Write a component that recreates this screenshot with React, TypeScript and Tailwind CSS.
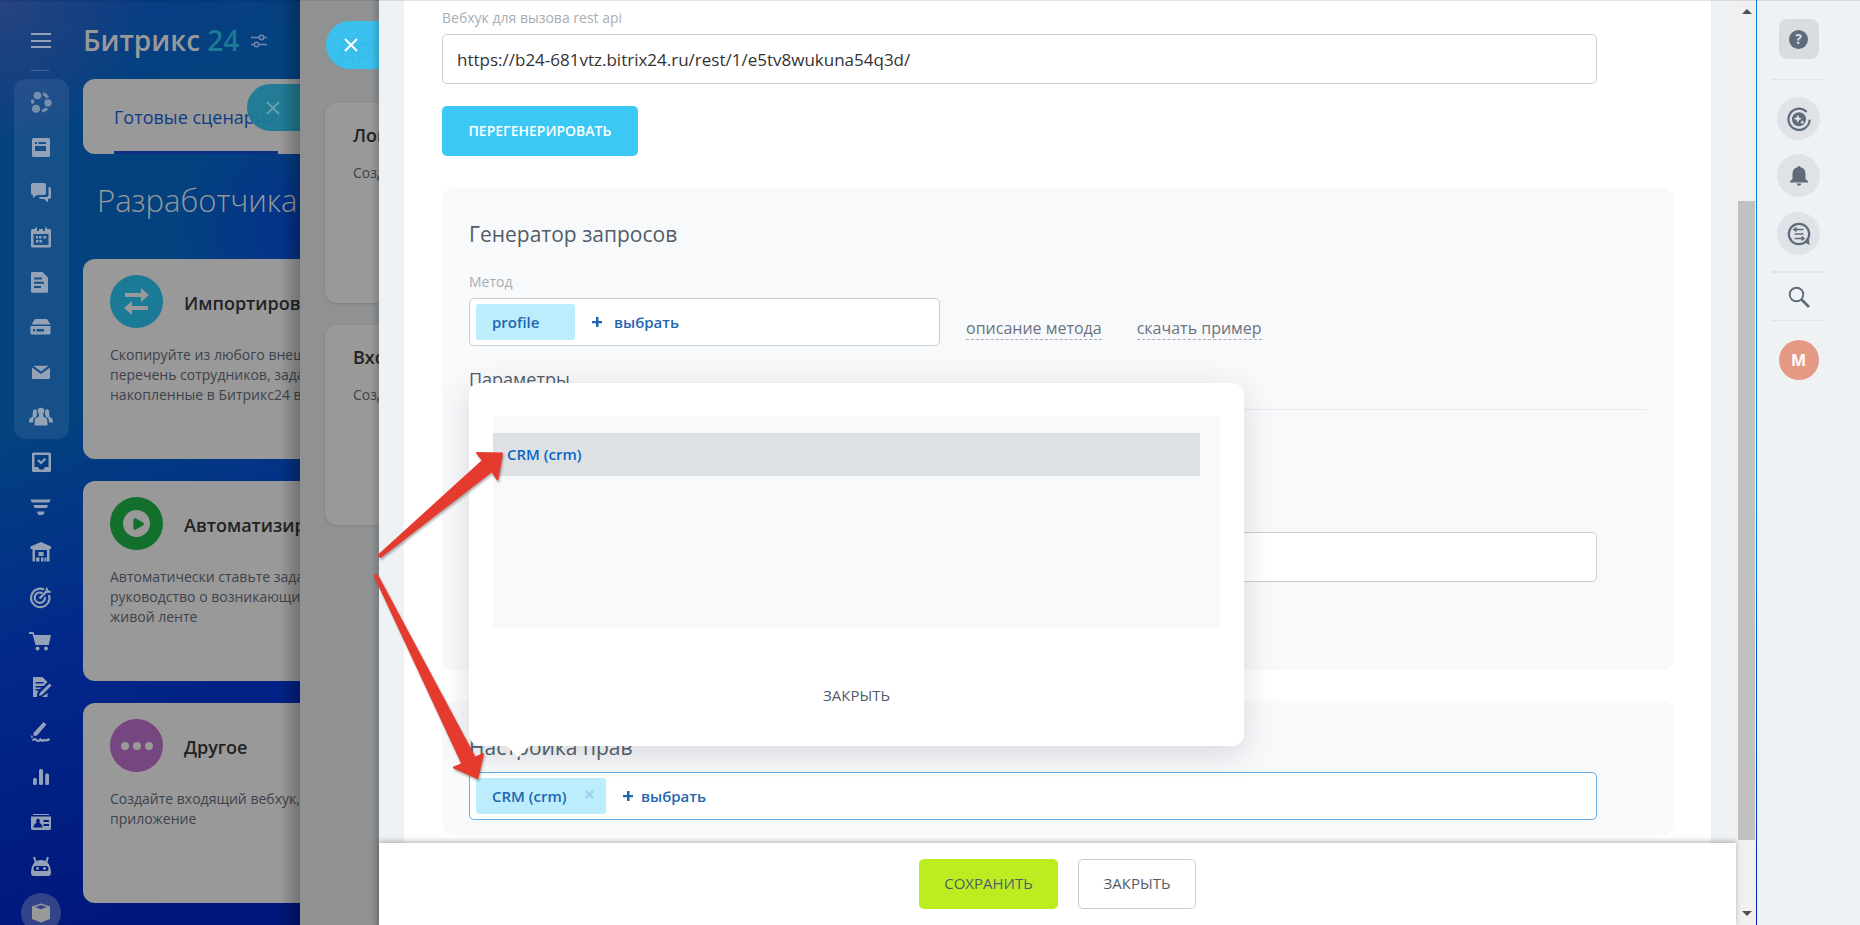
import type { ReactNode } from "react";
import { Play } from "lucide-react";

type NavItem = { label: string; icon: ReactNode };

const mainNav: NavItem[] = [
  {
    label: "CoPilot",
    icon: (
      <g opacity=".75">
        <circle cx="8.5" cy="5.5" r="3.8" />
        <circle cx="19" cy="13" r="3.7" />
        <circle cx="7" cy="18.7" r="4" />
        <path
          d="M14 3.6Q17 4.8 18.6 7.8M4 9.5Q3 12 4.2 13.6M13 21Q16 20.4 18.2 18.4"
          fill="none"
          stroke="currentColor"
          strokeWidth="3.2"
        />
      </g>
    ),
  },
  {
    label: "Лента",
    icon: (
      <path
        fillRule="evenodd"
        d="M4.500 3h15A1.500 1.500 0 0 1 21 4.500v16a1.500 1.500 0 0 1-1.500 1.500h-15A1.500 1.500 0 0 1 3 20.500v-16A1.500 1.500 0 0 1 4.500 3zM6 7v2h2V7zm3.500 0v2H17V7zM6 11v5h11v-5z"
      />
    ),
  },
  {
    label: "Чаты",
    icon: (
      <>
        <path d="M4 3h11a2 2 0 0 1 2 2v8a2 2 0 0 1-2 2H8l-4 3v-3a2 2 0 0 1-2-2V5a2 2 0 0 1 2-2z" />
        <path d="M19.500 7H20a2 2 0 0 1 2 2v8a2 2 0 0 1-2 2h-1v3.500L15 19h-3a2 2 0 0 1-2-2h7.500a2 2 0 0 0 2-2z" />
      </>
    ),
  },
  {
    label: "Календарь",
    icon: (
      <path
        fillRule="evenodd"
        d="M6 2.500h2V6h2V4h4v2h2V2.500h2V4h2.500A1.500 1.500 0 0 1 22 5.500V21a1.500 1.500 0 0 1-1.500 1.500h-17A1.500 1.500 0 0 1 2 21V5.500A1.500 1.500 0 0 1 3.500 4H6zM4.500 9v11h15V9zM10 11h2.500v2.500H10zm4.500 0H17v2.500h-2.500zM7 15h2.500v2.500H7zm3.500 0H13v2.500h-2.500zM7 11h2v2.500H7z"
      />
    ),
  },
  {
    label: "Документы",
    icon: (
      <path
        fillRule="evenodd"
        d="M3 2h10.500L19 7.500V21.500a1.200 1.200 0 0 1-1.200 1.200H3.200A1.200 1.200 0 0 1 2 21.500V3.200A1.200 1.200 0 0 1 3 2zM5 7.500v2h8v-2zm0 4.300v2h10v-2zm0 4.300v2h7v-2z"
      />
    ),
  },
  {
    label: "Диск",
    icon: (
      <path
        fillRule="evenodd"
        d="M6 4h12l3.500 5.500h-19zM1.500 11h20v7a1.500 1.500 0 0 1-1.500 1.500H2.500a1.500 1.500 0 0 1-1-1.500zM4 14v2.500h2V14zm3.500 0v2.500H15V14z"
      />
    ),
  },
  {
    label: "Почта",
    icon: (
      <>
        <path d="M3 7.500l9 6.500 9-6.500V18a1 1 0 0 1-1 1H4a1 1 0 0 1-1-1z" />
        <path d="M4.500 5.800h15L12 11.500z" />
      </>
    ),
  },
  {
    label: "Группы",
    icon: (
      <>
        <circle cx="12" cy="6" r="3.300" />
        <path d="M9.800 8.500h4.400v3l3.500 1.800Q18.500 15 18.500 20.500h-13q0-5.500.8-7.200l3.500-1.800z" />
        <path d="M4 5.500q2.500-2.500 3.700 0l.3 4-1.200 2.500-2.300 1.500-.5 4H0q0-3.500 1-4.300L3.500 12zM20 5.500q-2.500-2.500-3.700 0l-.3 4 1.200 2.500 2.300 1.500.5 4h4q0-3.500-1-4.300L20.500 12z" />
      </>
    ),
  },
];

const extraNav: NavItem[] = [
  {
    label: "Задачи",
    icon: (
      <>
        <path
          fillRule="evenodd"
          d="M4.500 2.500h16A1.500 1.500 0 0 1 22 4v16.500a1.500 1.500 0 0 1-1.500 1.500h-16A1.500 1.500 0 0 1 3 20.500V4a1.500 1.500 0 0 1 1.500-1.500zM5.500 5v12H9l1.500 2.500h4L16 17h3.500V5z"
        />
        <path d="M9 10l3 3 4.500-4.500" fill="none" stroke="currentColor" strokeWidth="2.200" />
      </>
    ),
  },
  {
    label: "CRM",
    icon: (
      <path d="M1.500 4.500h20L21 6.500a1.500 1.500 0 0 1-1.500 1H4A1.500 1.500 0 0 1 2.200 6.500zM4.500 10h14.500l-.6 2a1.500 1.500 0 0 1-1.400 1H6.500A1.500 1.500 0 0 1 5 12zM8 16.500h7.500q-.5 3.500-2.500 3.500h-2.500Q8.500 20 8 16.500z" />
    ),
  },
  {
    label: "Склад",
    icon: (
      <path
        fillRule="evenodd"
        d="M12 2l10 4.500V9H20.500v12.500H18V10H6v11.500H3.500V9H1.500V6.500zM9.500 12h5v4h-5zM7 17.500h3.500v4H7zm5 0h2.500v4H12zm3.500 0h2v4h-2z"
      />
    ),
  },
  {
    label: "Маркетинг",
    icon: (
      <g fill="none" stroke="currentColor" strokeWidth="2.100">
        <path d="M15 4.500A9.200 9.200 0 1 0 20 10" />
        <path d="M13.500 8.200A5.200 5.200 0 1 0 16 12" />
        <path d="M10.500 13.500L18 6" strokeWidth="2.400" />
        <path d="M17 6.500l.5-4 1.500 3 3 1.500-4 .5z" fill="currentColor" strokeWidth="1" />
      </g>
    ),
  },
  {
    label: "Магазин",
    icon: (
      <>
        <path d="M0 2h4.500l1 3H22l-2.200 10H6.500L3.500 4H0z" />
        <circle cx="8.500" cy="18.500" r="2" />
        <circle cx="17" cy="18.500" r="2" />
      </>
    ),
  },
  {
    label: "Подпись",
    icon: (
      <>
        <path
          fillRule="evenodd"
          d="M4 2h9.500l5 5L14 11.500V11H6.500v1.500h6L11 14H6.500v1.500h3L8 19v3H4zM6.500 7v1.500h8V7z"
        />
        <path d="M20.500 8.500l2 2L13 20l-3 1 .8-3zM18.500 18v4H13z" />
      </>
    ),
  },
  {
    label: "КЭДО",
    icon: (
      <>
        <path d="M14.500 2l3 2.500L8 15.500l-3.500.5V13zM2.500 15l2 2.500-2.500.5z" />
        <path
          d="M3.500 20.500q3-3 4 0 3 1 4-1 2 2 4 .5 2 1 5-1"
          fill="none"
          stroke="currentColor"
          strokeWidth="2.200"
        />
      </>
    ),
  },
  {
    label: "Аналитика",
    icon: (
      <>
        <rect x="4" y="13" width="3.800" height="7" rx="1.500" />
        <rect x="10" y="4" width="4" height="16" rx="1.500" />
        <rect x="16.200" y="8.500" width="3.800" height="11.500" rx="1.500" />
      </>
    ),
  },
  {
    label: "Сотрудники",
    icon: (
      <>
        <path d="M4 4h16v1H4z" />
        <path
          fillRule="evenodd"
          d="M2 6.500h20v12a1.500 1.500 0 0 1-1.500 1.500h-17A1.500 1.500 0 0 1 2 18.500zM9 8.500q-2.500.5-1.500 4.500-3 1-3 4.500h9q0-3.500-3-4.500 1-4-1.500-4.500zM14.500 10v2H20v-2zm0 4v2H20v-2z"
        />
      </>
    ),
  },
  {
    label: "Роботы",
    icon: (
      <>
        <path
          fillRule="evenodd"
          d="M12 5q9 0 10 12 0 3.500-2 4H4q-2-.5-2-4Q3 5 12 5zM6.500 11q-2 0-2 2.500t2 2.500h11q2 0 2-2.500t-2-2.500z"
        />
        <circle cx="8.500" cy="13.500" r="1.400" />
        <circle cx="15.500" cy="13.500" r="1.400" />
        <path d="M5 2l2 6M19 2l-2 6" stroke="currentColor" strokeWidth="2" />
      </>
    ),
  },
];

const scenarios = [
  {
    title: "Импортировать",
    color: "bg-[#1b7a96]",
    lines: [
      "Скопируйте из любого внешнего",
      "перечень сотрудников, задач",
      "накопленные в Битрикс24 в",
    ],
    icon: (
      <svg viewBox="0 0 53 53" className="size-[53px] fill-[#999]">
        <path d="M15 18h16v-5l8 7-8 7v-5H15zM38 31H22v-5l-8 7 8 7v-5h16z" />
      </svg>
    ),
  },
  {
    title: "Автоматизировать",
    color: "bg-[#13702c]",
    lines: ["Автоматически ставьте задачи", "руководство о возникающих", "живой ленте"],
    icon: (
      <span className="flex size-[27px] items-center justify-center rounded-full bg-[#999]">
        <Play className="ml-0.5 size-3.5 fill-[#13702c] text-[#13702c]" />
      </span>
    ),
  },
  {
    title: "Другое",
    color: "bg-[#764680]",
    lines: ["Создайте входящий вебхук,", "приложение"],
    icon: (
      <span className="flex gap-1">
        <i className="size-2 rounded-full bg-[#999]" />
        <i className="size-2 rounded-full bg-[#999]" />
        <i className="size-2 rounded-full bg-[#999]" />
      </span>
    ),
  },
];

function NavLink({ item }: { item: NavItem }) {
  return (
    <a href="#" aria-label={item.label} className="flex h-[45px] shrink-0 items-center justify-center pr-px">
      <svg viewBox="0 0 24 24" className="size-6 fill-current">
        {item.icon}
      </svg>
    </a>
  );
}

function Cross({ className }: { className: string }) {
  return (
    <svg viewBox="0 0 14 14" className={className} fill="none" stroke="currentColor">
      <path d="M1 1l12 12M13 1L1 13" strokeWidth="2" />
    </svg>
  );
}

function Plus() {
  return (
    <svg viewBox="0 0 10 10" className="size-2.5 fill-current">
      <path d="M4 0h2.500v4H10v2.200H6.500V10H4V6.200H0V4h4z" />
    </svg>
  );
}

function Portal() {
  return (
    <div className="flex w-[300px] shrink-0 overflow-hidden bg-[radial-gradient(circle_at_0_0,#26447f_0,#26447f00_150px),radial-gradient(circle_at_300px_230px,#04308a_0,#04308a00_130px),linear-gradient(160deg,#0a3a86_0%,#03427f_15%,#03427f_42%,#02298a_64%,#00157a_95%)]">
      <nav className="flex w-[83px] shrink-0 flex-col px-3.5 text-[#94a2b8]">
        <button
          aria-label="Меню"
          className="mt-[33px] ml-[17px] flex h-[15px] w-5 shrink-0 flex-col justify-between"
        >
          <span className="h-0.5 w-5 bg-current" />
          <span className="h-0.5 w-5 bg-current" />
          <span className="h-0.5 w-5 bg-current" />
        </button>
        <span className="mt-[22px] ml-[17px] h-px w-[18px] shrink-0 bg-white/20" />
        <div className="mt-2 shrink-0 rounded-xl bg-white/8">
          {mainNav.map((item) => (
            <NavLink key={item.label} item={item} />
          ))}
        </div>
        {extraNav.map((item) => (
          <NavLink key={item.label} item={item} />
        ))}
        <a
          href="#"
          aria-label="Разработчикам"
          className="mt-1 ml-[7px] flex size-10 shrink-0 items-center justify-center rounded-full bg-[#33438a] text-[#999]"
        >
          <svg viewBox="0 0 24 24" className="size-6 fill-current">
            <path d="M12 2.500l9 3v12.500l-9 3.500-9-3.500V5.500z" />
            <path d="M12 4l6 2-6 2.200L6 6z" fill="#33438a" />
          </svg>
        </a>
      </nav>

      <div className="relative w-[217px] whitespace-nowrap">
        <header className="mt-5 flex h-10 items-center gap-3 text-[28px] font-semibold text-[#999]">
          <span>
            Битрикс <span className="text-[#1b7a96]">24</span>
          </span>
          <svg viewBox="0 0 16 14" className="mt-0.5 h-3.5 w-4" fill="none" stroke="#7585a8" strokeWidth="1.500">
            <path d="M0 3.500h8M13 3.500h3M0 10.500h3M8 10.500h8" />
            <circle cx="10.500" cy="3.500" r="2.200" />
            <circle cx="5.500" cy="10.500" r="2.200" />
          </svg>
        </header>

        <div className="mt-[19px] flex h-[75px] rounded-l-xl bg-[#999] pl-[31px]">
          <a
            href="#"
            className="flex h-[75px] items-center border-b-3 border-[#0d2f85] pt-1 text-lg font-medium text-[#0f3a86]"
          >
            Готовые сценарии
          </a>
        </div>
        <button
          aria-label="Закрыть"
          className="absolute top-[84px] right-0 flex h-[47px] w-[53px] items-center rounded-l-full bg-[#1b7a96]/95 pl-[19px] text-[#5fa0b0]"
        >
          <Cross className="size-3.5" />
        </button>

        <h1 className="mt-[22px] pl-3.5 text-[31px] leading-[48px] font-light text-[#999]">Разработчикам</h1>

        <div className="mt-[35px] flex flex-col gap-[22px]">
          {scenarios.map((card) => (
            <article key={card.title} className="h-[200px] shrink-0 rounded-l-xl bg-[#999] pt-4 pl-[27px]">
              <div className="flex items-center gap-[21px]">
                <span className={`flex size-[53px] shrink-0 items-center justify-center rounded-full ${card.color}`}>
                  {card.icon}
                </span>
                <h2 className="pt-0.5 text-lg font-semibold text-[#222]">{card.title}</h2>
              </div>
              <p className="mt-[17px] text-sm leading-5 text-[#3d434c]">
                {card.lines.map((line) => (
                  <span key={line} className="block">
                    {line}
                  </span>
                ))}
              </p>
            </article>
          ))}
        </div>
        <div className="absolute inset-y-0 right-0 w-5 bg-linear-to-r from-transparent to-black/25" />
      </div>
    </div>
  );
}

function BackSlider() {
  return (
    <div className="relative w-[79px] shrink-0 overflow-hidden bg-[#8f9193] pl-[25px] whitespace-nowrap">
      <h2 className="mt-[25px] pl-3 text-[28px] leading-[44px] font-light text-[#333]">Другое</h2>
      <button
        aria-label="Закрыть"
        className="absolute top-[21px] right-0 flex h-12 w-[53px] items-center rounded-l-full bg-[#35c3f0]/95 pl-[18px] text-white"
      >
        <Cross className="size-3.5" />
      </button>
      <div className="mt-[34px] flex flex-col gap-[22px]">
        {["Локальное приложение", "Входящий вебхук"].map((title) => (
          <article key={title} className="h-[200px] rounded-l-xl bg-[#999] pt-[18px] pl-7 shadow-sm">
            <h3 className="text-lg leading-7 font-semibold text-[#222]">{title}</h3>
            <p className="mt-3.5 text-sm leading-5 text-[#3d434c]">Создайте</p>
          </article>
        ))}
      </div>
      <div className="absolute inset-y-0 right-0 w-2 bg-linear-to-r from-transparent to-black/15" />
    </div>
  );
}

function ScopePopup() {
  return (
    <div
      role="dialog"
      className="absolute bottom-full -left-px z-10 mb-[27px] w-[775px] rounded-xl bg-white px-6 pt-[33px] shadow-[0_8px_30px_rgba(60,70,80,0.18)]"
    >
      <div className="h-[212px] bg-[#f8f9fb] pt-[17px] pr-5">
        <button className="flex h-[43px] w-full items-center bg-[#dde1e3] pl-3.5 text-[15px] font-semibold text-[#0b66c3]">
          CRM (crm)
        </button>
      </div>
      <div className="flex h-[118px] items-center justify-center pt-4">
        <button className="text-[15px] font-medium text-[#525c69]">ЗАКРЫТЬ</button>
      </div>
      <span className="absolute -bottom-2 left-[41px] size-4 rotate-45 bg-white" />
    </div>
  );
}

function WebhookForm() {
  return (
    <div className="flex min-h-0 flex-1 flex-col overflow-hidden px-[25px]">
      <div className="flex-1 bg-white pt-2 pr-[37px] pl-[38px]">
        <label htmlFor="hook" className="block text-sm leading-5 text-[#a8adb4]">
          Вебхук для вызова rest api
        </label>
        <div className="mt-1.5 pr-[77px]">
          <input
            id="hook"
            readOnly
            value="https://b24-681vtz.bitrix24.ru/rest/1/e5tv8wukuna54q3d/"
            className="block h-[50px] w-full rounded-[5px] border border-[#c6cdd3] bg-white px-3.5 text-[17px] text-[#333] outline-none"
          />
        </div>
        <button className="mt-[22px] h-[50px] w-[196px] rounded-[5px] bg-[#3bc8f5] text-sm font-semibold text-white">
          ПЕРЕГЕНЕРИРОВАТЬ
        </button>

        <section className="mt-8 h-[482px] rounded-xl bg-[#f8f9fb] pt-[30px] pr-7 pl-[27px]">
          <h2 className="text-[21px] leading-8 text-[#525c69]">Генератор запросов</h2>
          <p className="mt-[22px] text-sm leading-5 text-[#a8adb4]">Метод</p>
          <div className="mt-1.5 flex items-end gap-[26px]">
            <div className="flex h-12 w-[471px] items-center rounded-[5px] border border-[#c6cdd3] bg-white px-1.5 text-[15px] font-semibold text-[#1f67b0]">
              <span className="flex h-9 w-[99px] items-center rounded-[3px] bg-[#bcedfc] pl-4">profile</span>
              <button className="flex items-center gap-3 pl-[17px]">
                <Plus />
                выбрать
              </button>
            </div>
            <div className="mb-1.5 flex gap-[35px] text-base leading-[22px] text-[#6a737f]">
              <a href="#" className="border-b border-dashed border-[#a8adb4]">
                описание метода
              </a>
              <a href="#" className="border-b border-dashed border-[#a8adb4]">
                скачать пример
              </a>
            </div>
          </div>
          <h3 className="mt-[21px] border-b border-[#e6e9ec] pb-[18px] text-lg leading-6 font-medium text-[#525c69]">
            Параметры
          </h3>
          <div className="mt-[122px] pr-[49px]">
            <input
              aria-label="Параметр"
              className="block h-[50px] w-full rounded-[5px] border border-[#c6cdd3] bg-white px-3.5 outline-none"
            />
          </div>
        </section>

        <section className="mt-[31px] h-[134px] rounded-xl bg-[#f8f9fb] pt-[30px] pr-[77px] pl-[27px]">
          <h2 className="text-[21px] leading-8 text-[#525c69]">Настройка прав</h2>
          <div className="relative mt-[9px] flex h-12 items-center rounded-[5px] border border-[#66afe9] bg-white px-1.5 text-[15px] font-semibold text-[#1f67b0]">
            <span className="flex h-9 w-[130px] items-center justify-between rounded-[3px] bg-[#bcedfc] pr-3 pl-4">
              CRM (crm)
              <button aria-label="Удалить" className="-mt-1 text-[#9fd3ec]">
                <svg viewBox="0 0 9 9" className="size-[9px]" stroke="currentColor" strokeWidth="2.500">
                  <path d="M1 1l7 7M8 1L1 8" />
                </svg>
              </button>
            </span>
            <button className="flex items-center gap-2 pl-[17px]">
              <Plus />
              выбрать
            </button>
            <ScopePopup />
          </div>
        </section>
      </div>
    </div>
  );
}

function Scrollbar() {
  return (
    <div className="flex w-5 shrink-0 flex-col items-center bg-[#f0f0f0]">
      <svg viewBox="0 0 20 18" className="h-[18px] w-5 fill-[#505050]">
        <path d="M6 14l5-5 5 5z" />
      </svg>
      <div className="grow-[183]" />
      <div className="w-[17px] grow-[639] bg-[#c1c1c1]" />
      <div className="grow-[67]" />
      <svg viewBox="0 0 20 18" className="h-[18px] w-5 fill-[#505050]">
        <path d="M6 4h10l-5 5z" />
      </svg>
    </div>
  );
}

function RightRail() {
  return (
    <aside className="flex w-[103px] shrink-0 pl-[15px]">
      <div className="flex w-[53px] flex-col items-center pt-[19px] text-[#5f6b7a]">
        <button aria-label="Помощь" className="flex size-10 items-center justify-center rounded-lg bg-[#d9dde0]">
          <span className="flex size-[19px] items-center justify-center rounded-full bg-[#5f6b7a] text-sm font-bold text-[#d9dde0]">
            ?
          </span>
        </button>
        <span className="mt-5 h-px w-full bg-[#e0e4e8]" />
        <button
          aria-label="CoPilot"
          className="mt-[17px] flex size-[43px] items-center justify-center rounded-full bg-[#dfe2e7]"
        >
          <svg viewBox="0 0 24 24" className="size-6" fill="none" stroke="currentColor">
            <path d="M19 4.300A10.600 10.600 0 1 0 22.600 13.500" strokeWidth="2.200" strokeLinecap="round" />
            <circle cx="12" cy="12.200" r="7" fill="currentColor" stroke="none" />
            <path
              d="M10.800 7.500l1.200 3 3 1.200-3 1.200-1.200 3-1.200-3-3-1.200 3-1.200zM15.300 13l.7 1.500 1.500.7-1.500.7-.7 1.500-.7-1.500-1.500-.7 1.500-.7z"
              fill="#dfe2e7"
              stroke="none"
            />
          </svg>
        </button>
        <button
          aria-label="Уведомления"
          className="mt-3.5 flex size-[43px] items-center justify-center rounded-full bg-[#dfe2e7]"
        >
          <svg viewBox="0 0 24 24" className="size-6 fill-current">
            <path d="M12 2q1.200 0 1.500 1.300Q18.500 4.500 18.500 10v5l2.500 2.300V18.500H3V17.300L5.500 15v-5q0-5.500 5-6.700Q10.800 2 12 2zM9.500 19.500h5q-.5 2.300-2.500 2.300t-2.500-2.300z" />
          </svg>
        </button>
        <button
          aria-label="Сообщения"
          className="mt-[15px] flex size-[43px] items-center justify-center rounded-full bg-[#dfe2e7]"
        >
          <svg viewBox="0 0 24 24" className="size-6" fill="none" stroke="currentColor">
            <circle cx="12" cy="12" r="10.200" strokeWidth="2.200" />
            <path d="M17 20l5-3.500.5 6.500z" fill="currentColor" stroke="none" />
            <path d="M7 7.500h9.500M7.500 12h9M7.500 16.500h9M9.500 5.500l-2.500 2 2.500 2M14.500 14.500l2.500 2-2.500 2" strokeWidth="1.600" />
          </svg>
        </button>
        <span className="mt-4 h-0.5 w-full bg-[#e0e4e8]" />
        <button aria-label="Поиск" className="mt-[13px]">
          <svg viewBox="0 0 22 22" className="size-[22px]" fill="none" stroke="currentColor">
            <circle cx="8.500" cy="8.500" r="6.800" strokeWidth="1.900" />
            <path d="M13.500 13.500l7.500 7.500" strokeWidth="2.600" />
          </svg>
        </button>
        <span className="mt-3 h-px w-full bg-[#e0e4e8]" />
        <button className="mt-[19px] flex size-10 items-center justify-center rounded-full bg-[#e59984] text-base font-bold text-white">
          M
        </button>
      </div>
    </aside>
  );
}

// Red pointers from the panel edge to the scope in the list and to its token
function Pointers() {
  return (
    <svg
      viewBox="0 0 120 340"
      className="pointer-events-none absolute top-[445px] left-[370px] z-20 h-[340px] w-[120px] overflow-visible fill-[#e53b2f] stroke-[#e53b2f] drop-shadow-[1px_2px_1px_rgba(0,0,0,0.3)]"
      strokeLinejoin="round"
      strokeWidth="2"
    >
      <path d="M9 110l104-94.500-6-7.500 25 .5-4.500 26-5.500-8.500L10.500 112z" />
      <path d="M5 131l87.500 188-8.500 3.500 23.500 10.500 5.500-24-8 4L7 130z" />
    </svg>
  );
}

export default function App() {
  return (
    <div className="relative flex h-screen overflow-hidden bg-[#eef2f5] font-['Open_Sans','Noto_Sans',sans-serif]">
      <Portal />
      <BackSlider />
      <main className="flex min-w-0 flex-1 flex-col">
        <WebhookForm />
        <footer className="z-10 flex h-[82px] shrink-0 items-center justify-center gap-5 bg-white text-[15px] font-medium text-[#525c69] shadow-[0_-2px_5px_rgba(0,0,0,0.25)]">
          <button className="h-[50px] w-[139px] rounded-[5px] bg-[#bbed21] pb-0.5">СОХРАНИТЬ</button>
          <button className="h-[50px] w-[118px] rounded-[5px] border border-[#c6cdd3] pb-0.5">ЗАКРЫТЬ</button>
        </footer>
      </main>
      <Scrollbar />
      <div className="w-px shrink-0 bg-linear-to-b from-[#0a7be8] from-55% to-[#0818b8]" />
      <RightRail />
      <Pointers />
      <div className="absolute inset-x-0 top-0 h-px bg-black/10" />
    </div>
  );
}
